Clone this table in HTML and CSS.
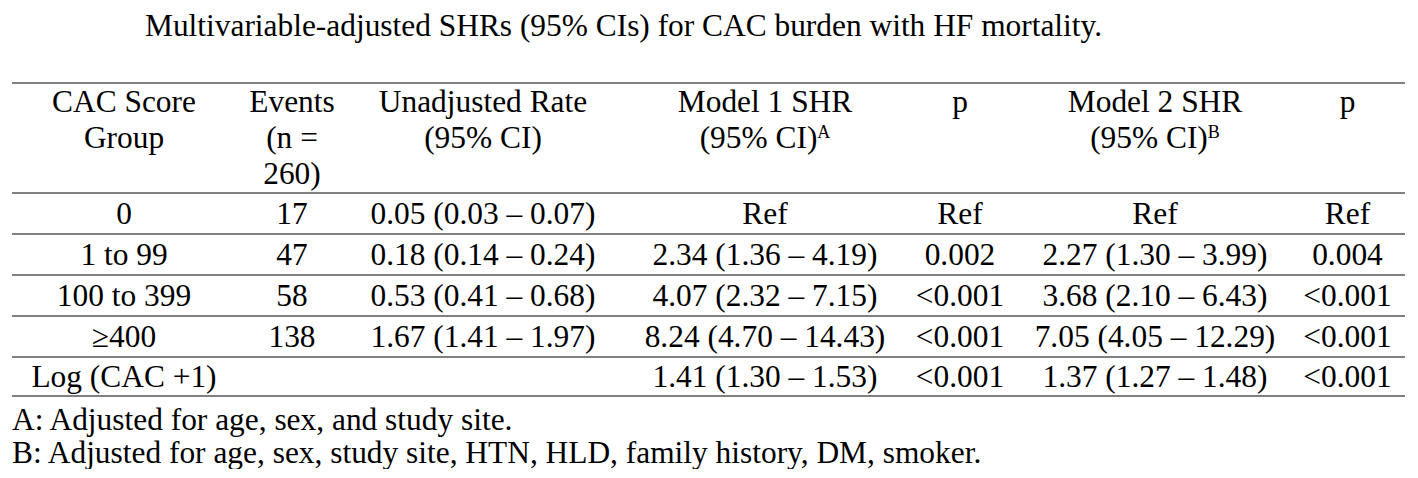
FILE: index.html
```html
<!DOCTYPE html>
<html>
<head>
<meta charset="utf-8">
<link rel="stylesheet" href="styles.css">
</head>
<body>
<div class="page">
  <p class="title">Multivariable-adjusted SHRs (95% CIs) for CAC burden with HF mortality.</p>
  <table class="tbl">
    <colgroup>
      <col class="c1"><col class="c2"><col class="c3"><col class="c4"><col class="c5"><col class="c6"><col class="c7">
    </colgroup>
    <thead>
      <tr>
        <th>CAC Score Group</th>
        <th>Events (n = 260)</th>
        <th>Unadjusted Rate (95% CI)</th>
        <th>Model 1 SHR<br>(95% CI)<sup>A</sup></th>
        <th>p</th>
        <th>Model 2 SHR<br>(95% CI)<sup>B</sup></th>
        <th class="last">p</th>
      </tr>
    </thead>
    <tbody>
      <tr><td>0</td><td>17</td><td>0.05 (0.03 – 0.07)</td><td>Ref</td><td>Ref</td><td>Ref</td><td class="last">Ref</td></tr>
      <tr><td>1 to 99</td><td>47</td><td>0.18 (0.14 – 0.24)</td><td>2.34 (1.36 – 4.19)</td><td>0.002</td><td>2.27 (1.30 – 3.99)</td><td class="last">0.004</td></tr>
      <tr><td>100 to 399</td><td>58</td><td>0.53 (0.41 – 0.68)</td><td>4.07 (2.32 – 7.15)</td><td>&lt;0.001</td><td>3.68 (2.10 – 6.43)</td><td class="last">&lt;0.001</td></tr>
      <tr><td>≥400</td><td>138</td><td>1.67 (1.41 – 1.97)</td><td>8.24 (4.70 – 14.43)</td><td>&lt;0.001</td><td>7.05 (4.05 – 12.29)</td><td class="last">&lt;0.001</td></tr>
      <tr class="endrow"><td>Log (CAC +1)</td><td></td><td></td><td>1.41 (1.30 – 1.53)</td><td>&lt;0.001</td><td>1.37 (1.27 – 1.48)</td><td class="last">&lt;0.001</td></tr>
    </tbody>
  </table>
  <div class="notes">
    <p>A: Adjusted for age, sex, and study site.</p>
    <p>B: Adjusted for age, sex, study site, HTN, HLD, family history, DM, smoker.</p>
  </div>
</div>
</body>
</html>
```

FILE: styles.css
```css
html, body {
  margin: 0;
  padding: 0;
  background: #ffffff;
}
body {
  font-family: "Liberation Serif", "Times New Roman", serif;
  color: #000000;
  font-size: 31.4px;
}
.page {
  padding: 8px 13px 0 12px;
}
.title {
  margin: 0 0 38px 0;
  padding-left: 133px;
  line-height: 36px;
}
.tbl {
  width: 1393px;
  border-collapse: collapse;
  table-layout: fixed;
}
.c1 { width: 224px; }
.c2 { width: 112px; }
.c3 { width: 270px; }
.c4 { width: 294px; }
.c5 { width: 96px; }
.c6 { width: 294px; }
.c7 { width: 103px; }
.tbl th {
  font-weight: normal;
  text-align: center;
  vertical-align: top;
  line-height: 36px;
  padding: 0 10px;
  border-top: 2px solid #808080;
  border-bottom: 2px solid #808080;
}
.tbl td {
  text-align: center;
  line-height: 36px;
  padding: 2px 0 1px 0;
  border-bottom: 2px solid #808080;
  white-space: nowrap;
}
.tbl .last {
  padding-right: 12px;
}
.tbl th.last {
  padding-left: 0;
}
.tbl sup {
  font-size: 18px;
  line-height: 0;
  vertical-align: 10px;
}
.endrow td {
  padding: 1px 0 0 0;
}
.notes {
  padding-top: 6px;
}
.notes p {
  margin: 0;
  line-height: 33px;
}
```
